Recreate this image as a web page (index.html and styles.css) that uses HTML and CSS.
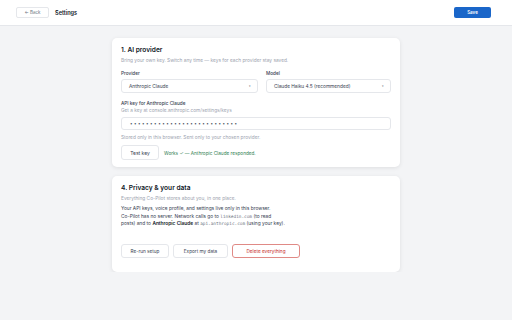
FILE: index.html
```html
<!DOCTYPE html>
<html lang="en">
<head>
    <meta charset="UTF-8">
    <meta name="viewport" content="width=device-width, initial-scale=1.0">
    <title>Settings</title>
    <link rel="stylesheet" href="styles.css">
</head>
<body>
    <header class="topbar">
        <div class="topbar-left">
            <button class="btn-back">&larr; Back</button>
            <span class="page-title">Settings</span>
        </div>
        <button class="btn-save">Save</button>
    </header>

    <main class="content">
        <section class="card">
            <h2>1. AI provider</h2>
            <p class="sub">Bring your own key. Switch any time &mdash; keys for each provider stay saved.</p>

            <div class="field-row">
                <div class="field">
                    <label>Provider</label>
                    <div class="select"><span>Anthropic Claude</span><span class="caret">&#9662;</span></div>
                </div>
                <div class="field">
                    <label>Model</label>
                    <div class="select"><span>Claude Haiku 4.5 (recommended)</span><span class="caret">&#9662;</span></div>
                </div>
            </div>

            <div class="field key-field">
                <label>API key for Anthropic Claude</label>
                <p class="hint">Get a key at console.anthropic.com/settings/keys</p>
                <div class="input">&bull;&bull;&bull;&bull;&bull;&bull;&bull;&bull;&bull;&bull;&bull;&bull;&bull;&bull;&bull;&bull;&bull;&bull;&bull;&bull;&bull;&bull;&bull;&bull;&bull;&bull;&bull;</div>
                <p class="hint note">Stored only in this browser. Sent only to your chosen provider.</p>
            </div>

            <div class="test-row">
                <button class="btn btn-test">Test key</button>
                <span class="ok">Works &#10003; &mdash; Anthropic Claude responded.</span>
            </div>
        </section>

        <section class="card card-privacy">
            <h2>4. Privacy &amp; your data</h2>
            <p class="sub">Everything Co-Pilot stores about you, in one place.</p>
            <p class="body-text">
                Your API keys, voice profile, and settings live only in this browser.<br>
                Co-Pilot has no server. Network calls go to <code>linkedin.com</code> (to read<br>
                posts) and to <strong>Anthropic Claude</strong> at <code>api.anthropic.com</code> (using your key).
            </p>
            <div class="actions">
                <button class="btn">Re-run setup</button>
                <button class="btn">Export my data</button>
                <button class="btn btn-danger">Delete everything</button>
            </div>
        </section>
    </main>
</body>
</html>
```

FILE: styles.css
```css
body {
    font-family: Inter, "Noto Sans", sans-serif;
    background-color: #f3f4f6;
    margin: 0;
    color: #374151;
}
button {
    font-family: inherit;
    cursor: pointer;
}
.topbar {
    height: 25px;
    background-color: white;
    border-bottom: 1px solid #e5e7eb;
    display: flex;
    align-items: center;
    justify-content: space-between;
    padding: 0 21px 0 16px;
}
.topbar-left {
    display: flex;
    align-items: center;
    gap: 6px;
}
.btn-back {
    width: 33px;
    height: 11px;
    padding: 0;
    background: white;
    border: 1px solid #e5e7eb;
    border-radius: 2px;
    font-size: 4.5px;
    color: #6b7280;
}
.page-title {
    font-size: 5.6px;
    font-weight: 600;
    color: #111827;
}
.btn-save {
    width: 37px;
    height: 11px;
    padding: 0;
    background-color: #1a66c9;
    border: none;
    border-radius: 2px;
    color: white;
    font-size: 4.5px;
    font-weight: 600;
}
.content {
    padding-top: 12px;
    display: flex;
    flex-direction: column;
    align-items: center;
    gap: 9px;
}
.card {
    width: 288px;
    box-sizing: border-box;
    background-color: white;
    border-radius: 5px;
    box-shadow: 0 1px 4px rgba(0, 0, 0, 0.09);
    padding: 9px 9px 7px 9px;
}
.card h2 {
    margin: 0;
    font-size: 6.6px;
    line-height: 7px;
    font-weight: 600;
    color: #111827;
}
.sub {
    margin: 3px 0 0;
    font-size: 4.8px;
    line-height: 6px;
    color: #9ca3af;
}
.field-row {
    display: grid;
    grid-template-columns: 137px 1fr;
    gap: 8px;
    margin-top: 7px;
}
.field label {
    display: block;
    font-size: 4.7px;
    line-height: 6px;
    font-weight: 500;
    color: #374151;
}
.select {
    margin-top: 3px;
    height: 14px;
    box-sizing: border-box;
    border: 1px solid #e5e7eb;
    border-radius: 3px;
    display: flex;
    align-items: center;
    justify-content: space-between;
    padding: 0 6px 0 7px;
    font-size: 4.8px;
    color: #374151;
}
.caret {
    font-size: 3px;
    color: #6b7280;
}
.key-field {
    margin-top: 7px;
}
.hint {
    margin: 1px 0 0;
    font-size: 4.75px;
    line-height: 6px;
    color: #9ca3af;
}
.input {
    margin-top: 4px;
    height: 13px;
    box-sizing: border-box;
    border: 1px solid #e5e7eb;
    border-radius: 3px;
    padding: 0 8px;
    display: flex;
    align-items: center;
    font-size: 4.4px;
    letter-spacing: 1.55px;
    color: #4b5563;
}
.note {
    margin-top: 4px;
}
.test-row {
    margin-top: 5px;
    display: flex;
    align-items: center;
    gap: 5px;
}
.btn {
    height: 15px;
    padding: 0 8px;
    background: white;
    border: 1px solid #e5e7eb;
    border-radius: 3px;
    font-size: 4.7px;
    color: #374151;
}
.btn-test {
    width: 38px;
    padding: 0;
    font-size: 5px;
}
.ok {
    font-size: 4.7px;
    color: #2e7d4f;
}
.card-privacy {
    padding-bottom: 14px;
}
.body-text {
    margin: 4px 0 0;
    font-size: 4.85px;
    line-height: 7.7px;
    color: #374151;
}
.body-text strong {
    font-weight: 600;
    color: #111827;
}
.body-text code {
    font-family: "DejaVu Sans Mono", monospace;
    font-size: 4.4px;
    color: #6b7280;
}
.actions {
    margin-top: 16px;
    display: flex;
    gap: 4px;
}
.actions .btn {
    height: 14px;
}
.actions .btn:nth-child(1) {
    width: 48px;
    padding: 0;
}
.actions .btn:nth-child(2) {
    width: 55px;
    padding: 0;
}
.btn-danger {
    width: 68px;
    padding: 0;
    border-color: #e08a86;
    color: #c62828;
}
```
